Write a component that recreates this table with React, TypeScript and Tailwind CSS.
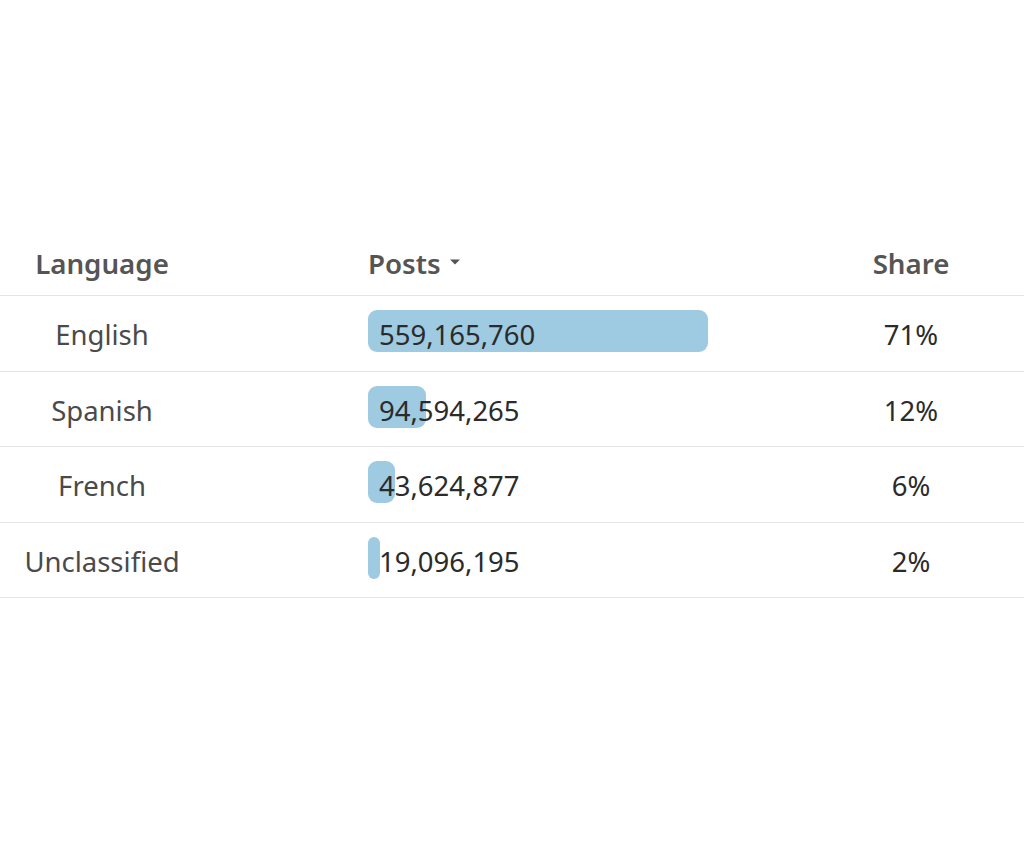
const rows = [
  { lang: "English", posts: 559165760, share: "71%" },
  { lang: "Spanish", posts: 94594265, share: "12%" },
  { lang: "French", posts: 43624877, share: "6%" },
  { lang: "Unclassified", posts: 19096195, share: "2%" },
];

const max = 559165760;

export default function App() {
  return (
    <div className="min-h-[843px] bg-white pt-[232px] font-['Noto_Sans',sans-serif]">
      <div className="grid h-[64px] grid-cols-[368px_1fr_226px] items-center border-b border-[#e4e4e4] text-[27.7px] font-semibold text-[#555]">
        <div className="w-[204px] text-center">Language</div>
        <div className="flex items-center gap-2">
          Posts
          <svg width="12" height="8" viewBox="0 0 12 8" className="mt-[-2px]">
            <path d="M1 1.5h10L6 6.5z" fill="#555" />
          </svg>
        </div>
        <div className="text-center">Share</div>
      </div>
      {rows.map((r) => (
        <div
          key={r.lang}
          className="grid h-[75.5px] grid-cols-[368px_1fr_226px] items-center border-b border-[#e4e4e4] text-[27.5px]"
        >
          <div className="w-[204px] pt-[3px] text-center text-[#4a4a4a]">{r.lang}</div>
          <div className="relative flex h-[42px] items-center">
            <div
              className="absolute left-0 top-[-2px] h-full rounded-[9px] bg-[#9ecae2]"
              style={{ width: Math.max(9, (r.posts / max) * 340) }}
            />
            <span className="relative pl-[11px] pt-[3px] text-[#2b2b2b]">{r.posts.toLocaleString("en-US")}</span>
          </div>
          <div className="pt-[3px] text-center text-[#2b2b2b]">{r.share}</div>
        </div>
      ))}
    </div>
  );
}
